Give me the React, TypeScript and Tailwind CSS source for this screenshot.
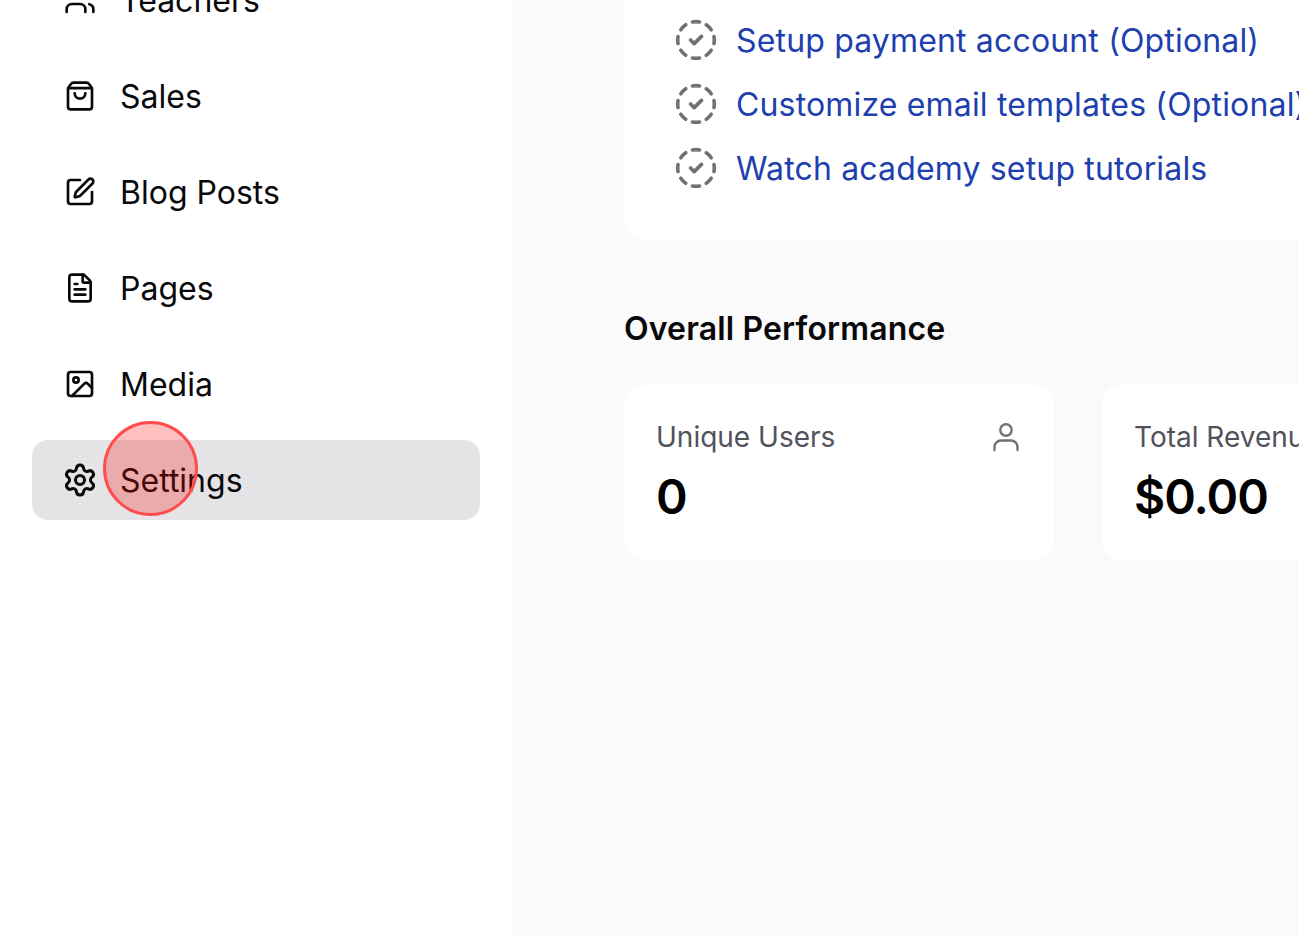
import React from "react";
import { FileText, Image as ImageIcon, Settings, ShoppingBag, SquarePen, Users } from "lucide-react";

const navItems = [
  { label: "Teachers", icon: Users, iconClass: "h-8 w-8" },
  { label: "Sales", icon: ShoppingBag, iconClass: "h-8 w-8" },
  { label: "Blog Posts", icon: SquarePen, iconClass: "h-8 w-8" },
  { label: "Pages", icon: FileText, iconClass: "h-8 w-8" },
  { label: "Media", icon: ImageIcon, iconClass: "h-8 w-8" },
  { label: "Settings", icon: Settings, iconClass: "-mx-0.5 h-9 w-9", active: true },
];

const checklist = [
  "Setup payment account (Optional)",
  "Customize email templates (Optional)",
  "Watch academy setup tutorials",
];

const stats = [
  { label: "Unique Users", value: "0", icon: true },
  { label: "Total Revenue", value: "$0.00", icon: false },
];

function DashedCheck() {
  return (
    <svg viewBox="0 0 24 24" fill="none" stroke="currentColor" strokeWidth="2" strokeLinecap="round" strokeLinejoin="round" className="-mx-0.5 h-11 w-11 shrink-0 text-[#71717a]">
      <path d="M10.1 2.182a10 10 0 0 1 3.8 0" />
      <path d="M13.9 21.818a10 10 0 0 1-3.8 0" />
      <path d="M17.609 3.721a10 10 0 0 1 2.69 2.7" />
      <path d="M2.182 13.9a10 10 0 0 1 0-3.8" />
      <path d="M20.279 17.609a10 10 0 0 1-2.7 2.69" />
      <path d="M21.818 10.1a10 10 0 0 1 0 3.8" />
      <path d="M3.721 6.391a10 10 0 0 1 2.7-2.69" />
      <path d="M6.391 20.279a10 10 0 0 1-2.69-2.7" />
      <path d="m9 12 2 2 4-4" />
    </svg>
  );
}

function UserGlyph() {
  return (
    <svg viewBox="0 0 32 32" fill="none" stroke="currentColor" strokeWidth="2.4" strokeLinecap="round" className="h-8 w-8 text-[#71717a]">
      <circle cx="16" cy="9" r="5.7" />
      <path d="M4.5 29v-3a6.5 6.5 0 0 1 6.5-6.5h10a6.5 6.5 0 0 1 6.5 6.5v3" />
    </svg>
  );
}

export default function App() {
  return (
    <div className="relative flex h-[937px] w-[1299px] overflow-hidden bg-[#fafafa] font-['Inter',sans-serif] text-[#09090b]">
      {/* Sidebar */}
      <aside className="h-full w-[512px] shrink-0 bg-white px-8">
        <nav className="-mt-10 flex flex-col gap-4">
          {navItems.map((item) => (
            <div
              key={item.label}
              className={`flex h-20 items-center gap-6 rounded-2xl pl-8 text-[32px] ${item.active ? "bg-[#e4e4e7]" : ""}`}
            >
              <item.icon className={`${item.iconClass} shrink-0`} strokeWidth={2} />
              <span className="pt-0.5">{item.label}</span>
            </div>
          ))}
        </nav>
      </aside>

      {/* Main */}
      <main className="flex min-w-0 flex-1 flex-col pl-28">
        <div className="-mt-10 w-[1000px] rounded-[20px] bg-white pb-10 pl-[52px] pt-12">
          {checklist.map((text) => (
            <div key={text} className="flex h-16 items-center gap-5">
              <DashedCheck />
              <span className="whitespace-nowrap pt-0.5 text-[32px] tracking-[0.16px] text-[#1e40af]">{text}</span>
            </div>
          ))}
        </div>

        <h2 className="mt-[69px] text-[32px] font-semibold leading-10 tracking-[0.15px]">Overall Performance</h2>

        <div className="mt-9 flex gap-12">
          {stats.map((stat) => (
            <div key={stat.label} className="h-[175px] w-[430px] shrink-0 rounded-[20px] bg-white px-8 pt-[32px]">
              <div className="flex items-center justify-between">
                <span className="whitespace-nowrap text-[28px] leading-10 text-[#52525b]">{stat.label}</span>
                {stat.icon && <UserGlyph />}
              </div>
              <div className="mt-3 text-[48px] font-semibold leading-[56px] tracking-[-1px] text-black">{stat.value}</div>
            </div>
          ))}
        </div>
      </main>

      {/* Click marker */}
      <div className="absolute left-[102.5px] top-[421px] h-[95px] w-[95px] rounded-full border-[3px] border-[#ff4d4d] bg-[#ff0000]/25" />
    </div>
  );
}
